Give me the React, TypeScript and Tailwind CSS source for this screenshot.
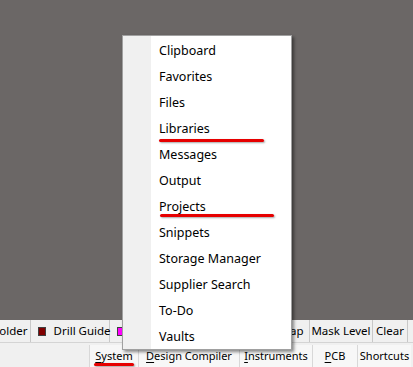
const MENU_ITEMS = [
  "Clipboard",
  "Favorites",
  "Files",
  "Libraries",
  "Messages",
  "Output",
  "Projects",
  "Snippets",
  "Storage Manager",
  "Supplier Search",
  "To-Do",
  "Vaults",
];

const STATUS_TABS = [
  { label: "System", key: "S", rest: "ystem", w: "w-[49px]" },
  { label: "Design Compiler", key: "D", rest: "esign Compiler", w: "w-[101px]" },
  { label: "Instruments", key: "I", rest: "nstruments", w: "w-[73px]" },
  { label: "PCB", key: "P", rest: "CB", w: "w-[45px]" },
  { label: "Shortcuts", key: "", rest: "Shortcuts", w: "w-[54px]" },
];

function RedMark({ className }: { className: string }) {
  return (
    <div
      className={`absolute h-[3px] rounded-full bg-[#e60000] shadow-[1px_1px_2px_rgba(0,0,0,0.35)] ${className}`}
    />
  );
}

export default function App() {
  return (
    <div
      className="relative w-[413px] h-[367px] overflow-hidden bg-[#6b6766] flex flex-col text-black"
      style={{ fontFamily: '"Noto Sans", "Open Sans", sans-serif' }}
    >
      {/* canvas area */}
      <div className="flex-1" />

      {/* layer tabs */}
      <div className="h-[22px] bg-[#f0f0f0] flex items-stretch text-[11.5px] leading-none whitespace-nowrap">
        <div className="flex items-stretch ml-[-8px]">
          <div className="flex items-center pl-[1px] pr-[2px] border-r border-[#c8c8c8]">Solder</div>
          <div className="w-[79px] shrink-0 flex items-center gap-[8px] pl-[7px] border-r border-[#c8c8c8]">
            <span className="w-[8px] h-[9px] shrink-0 bg-[#800000] border border-[#404040]" />
            <span>Drill Guide</span>
          </div>
          <div className="flex items-center pl-[7px]">
            <span className="w-[9px] h-[9px] bg-[#ff00ff] border border-[#404040]" />
          </div>
        </div>
        <div className="flex-1" />
        <div className="flex items-stretch mr-[5px]">
          <div className="w-[40px] flex items-center justify-center border-l border-r border-[#c8c8c8]">Snap</div>
          <div className="w-[63px] flex items-center justify-center border-r border-[#c8c8c8]">Mask Level</div>
          <div className="w-[35px] flex items-center justify-center border-r border-[#c8c8c8]">Clear</div>
        </div>
      </div>

      <div className="h-[3px] bg-[#f0f0f0] border-t border-[#d4d4d4]" />

      {/* status bar */}
      <div className="h-[22px] bg-[#f0f0f0] flex items-stretch pl-[89px] text-[11px] leading-none whitespace-nowrap">
        {STATUS_TABS.map(t => (
          <div
            key={t.label}
            className={`${t.w} flex items-center justify-center pb-[2px] border-l border-[#d8d8d8] bg-[#f7f7f7]`}
          >
            <span>
              {t.key && <span className="underline underline-offset-2">{t.key}</span>}
              {t.rest}
            </span>
          </div>
        ))}
      </div>

      {/* popup menu */}
      <div className="absolute left-[122px] top-[35px] w-[170px] h-[315px] bg-white border border-[#a0a0a0] shadow-[2px_2px_3px_rgba(0,0,0,0.45)] flex">
        <div className="w-[28px] bg-[#f0f0f0]" />
        <ul className="flex-1 flex flex-col pt-[2px] text-[12.5px]">
          {MENU_ITEMS.map(item => (
            <li key={item} className="h-[26px] shrink-0 flex items-center pl-[8px]">
              {item}
            </li>
          ))}
        </ul>
      </div>

      <RedMark className="left-[159px] top-[139px] w-[105px]" />
      <RedMark className="left-[160px] top-[214px] w-[114px]" />
      <RedMark className="left-[94px] top-[363px] w-[40px]" />
    </div>
  );
}
